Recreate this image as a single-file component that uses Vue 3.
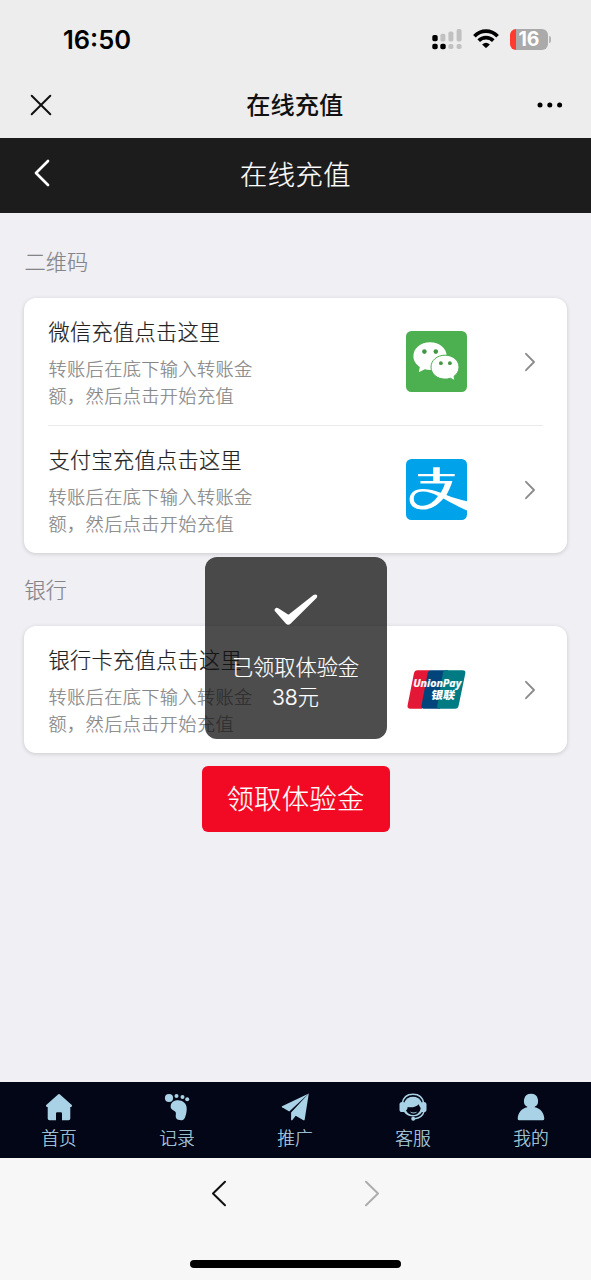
<script setup>
const desc = '转账后在底下输入转账金额，然后点击开始充值'
const groups = [
  {
    title: '二维码',
    items: [
      { name: '微信充值点击这里', icon: 'wechat' },
      { name: '支付宝充值点击这里', icon: 'alipay' },
    ],
  },
  { title: '银行', items: [{ name: '银行卡充值点击这里', icon: 'unionpay' }] },
]
const tabs = [
  { label: '首页', icon: 'home' },
  { label: '记录', icon: 'foot' },
  { label: '推广', icon: 'plane' },
  { label: '客服', icon: 'service' },
  { label: '我的', icon: 'user' },
]
</script>

<template>
  <div class="screen">
    <header class="status">
      <span class="time">16:50</span>
      <div class="indicators">
        <svg width="31" height="22" viewBox="0 0 31 22">
          <g fill="#000">
            <rect x="0.3" y="7" width="5.4" height="6.2" rx="1.8" />
            <rect x="0.3" y="15.8" width="5.4" height="5.4" rx="1.8" />
            <rect x="8.3" y="15.8" width="5.4" height="5.4" rx="1.8" />
          </g>
          <g fill="#c1c1c1">
            <rect x="8.4" y="5.8" width="5" height="7.6" rx="1.7" />
            <rect x="16.4" y="3.6" width="5" height="9.8" rx="1.7" />
            <rect x="24.6" y="1" width="5" height="12.4" rx="1.7" />
            <rect x="16.4" y="16" width="5" height="5" rx="1.8" />
            <rect x="24.6" y="16" width="5" height="5" rx="1.8" />
          </g>
        </svg>
        <svg class="wifi" width="26" height="20" viewBox="0 0 26 20">
          <g fill="none" stroke="#000" stroke-width="3.7">
            <path d="M1.4 7.2C8 .5 18 .5 24.6 7.2" />
            <path d="M5.7 11.7C9.9 7.7 16.1 7.7 20.3 11.7" />
          </g>
          <path d="M9.1 15.4Q13 12 16.9 15.4L13.7 18.6Q13 19.3 12.3 18.6Z" fill="#000" />
        </svg>
        <div class="battery"><span>16</span></div>
        <i class="nub"></i>
      </div>
    </header>

    <div class="webbar">
      <svg width="22" height="22" viewBox="0 0 22 22"><path d="M1.7 1.7 20.3 20.3M20.3 1.7 1.7 20.3" fill="none" stroke="#111" stroke-width="2" stroke-linecap="round" /></svg>
      <span class="webtitle">在线充值</span>
      <svg width="26" height="6" viewBox="0 0 26 6"><circle cx="3" cy="3" r="2.5" /><circle cx="12.8" cy="3" r="2.5" /><circle cx="22.6" cy="3" r="2.5" /></svg>
    </div>

    <div class="pagebar">
      <svg width="16" height="28" viewBox="0 0 16 28"><path d="M14 2 2 14 14 26" fill="none" stroke="#fff" stroke-width="2.7" stroke-linecap="round" stroke-linejoin="round" /></svg>
      <span class="pagetitle">在线充值</span>
    </div>

    <main>
      <section v-for="g in groups" :key="g.title">
        <h2>{{ g.title }}</h2>
        <div class="card">
          <div v-for="item in g.items" :key="item.name" class="item">
            <div class="copy">
              <h3>{{ item.name }}</h3>
              <p>{{ desc }}</p>
            </div>
            <svg v-if="item.icon === 'wechat'" class="logo" viewBox="0 0 61 61">
              <rect width="61" height="61" rx="5.5" fill="#4caf50" />
              <path d="M24 11.3C14.8 11.3 7.4 17.2 7.4 25.2C7.4 29.8 10 33.3 13.8 36L12.8 41.3L18.8 38.3C20.6 38.8 22.4 39 24 39C33.2 39 40.7 33 40.7 25.2C40.7 17.2 33.2 11.3 24 11.3Z" fill="#fff" />
              <path d="M39 24.2C31 24.2 25 29.4 25 36.1C25 42.8 31 48.1 39 48.1C40.9 48.1 42.7 47.8 44.3 47.2L49 49.7L48 45.3C51.1 43.2 53 39.9 53 36.1C53 29.4 47 24.2 39 24.2Z" fill="#fff" stroke="#4caf50" stroke-width="1" />
              <g fill="#439847"><circle cx="18.4" cy="20.6" r="2.3" /><circle cx="29.8" cy="20.6" r="2.3" /><circle cx="34.9" cy="32.2" r="1.9" /><circle cx="43.9" cy="32.2" r="1.9" /></g>
            </svg>
            <svg v-else-if="item.icon === 'alipay'" class="logo" viewBox="0 0 61 61">
              <rect width="61" height="61" rx="5.5" fill="#00a2e9" />
              <path d="M27.2 8.2H33.8V14.9H48.7V17.3H33.8V22H46.4C45 27 42.8 31.8 40.4 35.9C47 38.5 54 40.8 61 42.2V51.5C52.5 48 44.5 43.6 37.5 39.6C31.2 47 24.5 50.5 17 50.5C9 50.5 3.6 46.7 3.6 40.4C3.6 34.1 8.8 30.1 16.5 30.1C22.7 30.1 28.8 31.5 34.7 33.8C36.5 30.9 38 27.8 38.9 24.6H14.4V22H27.2V17.3H12V14.9H27.2Z" fill="#fff" />
              <path d="M32 37C26.5 34 21.3 32.4 16.5 32.5C10.8 32.5 7.8 35.5 7.8 39.7C7.8 44 11.2 46.7 16.8 46.7C22.5 46.7 27.5 43.2 32 37Z" fill="#00a2e9" />
            </svg>
            <svg v-else class="logo" viewBox="0 0 61 61">
              <path d="M11 11.2H24L16 49.7H4.5Q.9 49.7 1.6 46.3L8 14Q8.6 11.2 11 11.2Z" fill="#e21836" />
              <path d="M24.5 11.2H42L34 49.7H18Q14.8 49.7 15.5 46.3L21.8 13.8Q22.3 11.2 24.5 11.2Z" fill="#00447c" />
              <path d="M39.5 11.2H56.5Q60 11.2 59.3 14.5L52.6 46.8Q52 49.7 49 49.7H33.5Q30.7 49.7 31.3 46.5L37 13.5Q37.4 11.2 39.5 11.2Z" fill="#007b84" />
              <text x="7.2" y="28.2" textLength="48" lengthAdjust="spacingAndGlyphs" class="union-en">UnionPay</text>
              <text transform="translate(24.5 40.2) skewX(-10)" textLength="24" lengthAdjust="spacingAndGlyphs" class="union-cn">银联</text>
            </svg>
            <svg class="arrow" width="12" height="20" viewBox="0 0 12 20"><path d="M2 1.8 10 10 2 18.2" fill="none" stroke="#8c8c8c" stroke-width="1.9" stroke-linecap="round" stroke-linejoin="round" /></svg>
          </div>
        </div>
      </section>
      <button class="claim">领取体验金</button>
    </main>

    <nav class="tabs">
      <div v-for="t in tabs" :key="t.label" class="tab">
        <svg width="28" height="28" viewBox="0 0 28 28" fill="#a9d2e6">
          <path v-if="t.icon === 'home'" d="M13.3 1.2Q14 .6 14.7 1.2L26.8 12.1Q27.8 13.7 26 14H25.3V25.5Q25.3 27.3 23.5 27.3H17V20.5Q17 19.3 15.8 19.3H12.2Q11 19.3 11 20.5V27.3H4.5Q2.7 27.3 2.7 25.5V14H2Q.2 13.7 1.2 12.1Z" />
          <g v-else-if="t.icon === 'foot'">
            <circle cx="6" cy="5" r="4.1" /><circle cx="13.5" cy="3.1" r="2" /><circle cx="19.5" cy="3.9" r="2" /><circle cx="24.2" cy="6.3" r="2" />
            <path d="M7.7 12.6C8.4 8.7 12 6.9 16.5 7.4C21.5 8 24 11.7 23.7 16.5C23.5 20 22.8 22.5 22 24.4C21.1 26.7 18.8 27.6 16.5 27.1C13.3 26.5 12.4 24.5 12.8 22C13.2 19.8 12.7 18.7 11 17.8C8.7 16.8 7.2 15.2 7.7 12.6Z" />
          </g>
          <g v-else-if="t.icon === 'plane'">
            <path d="M27.8.5 1 13.3Q.3 13.8 1.1 14.3L8.2 18.4Z" /><path d="M27.8.5 10.1 19.6V27Q10.8 27.8 11.6 26.8L14.7 22.7L22.4 27.2Q23.4 27.6 23.7 26.4Z" />
          </g>
          <g v-else-if="t.icon === 'service'">
            <path d="M3.2 10.5C4.1 4.5 8.1 1.2 14 1.2S23.9 4.5 24.8 10.5" fill="none" stroke="#a9d2e6" stroke-width="1.6" />
            <path d="M5.3 9.5C6.8 5.8 10 3.8 14 3.8S21.2 5.8 22.7 9.5L23.5 17.5C22.3 21.3 18.7 23.4 14 23.4S5.7 21.3 4.5 17.5Z" />
            <rect x=".5" y="9" width="5.8" height="10" rx="2.6" /><rect x="21.7" y="9" width="5.8" height="10" rx="2.6" />
            <path d="M7 17.3C8.1 16.6 8.7 15.4 8.6 14C12.8 15 17.5 13.7 19.9 11.2C20.1 13 21 13.7 21.7 15C21.2 19.3 18.1 22 14.4 22C10.9 22 8.1 20.4 7 17.3Z" fill="#030616" />
            <path d="M10.8 18.6Q14.6 20.3 18.4 18.6Q17.3 20.6 14.6 20.6Q11.9 20.6 10.8 18.6Z" />
            <path d="M25 18.5C23.8 23 20 25.3 15.4 25.7" fill="none" stroke="#a9d2e6" stroke-width="1.4" /><circle cx="14.2" cy="25.7" r="2" />
          </g>
          <path v-else d="M14 .8A7 7 0 0 1 17.7 13.8V14.2C23.5 15.3 27.2 20 27.3 25.7Q27.3 27.3 25.7 27.3H2.3Q.7 27.3.7 25.7C.8 20 4.5 15.3 10.3 14.2V13.8A7 7 0 0 1 14 .8Z" />
        </svg>
        <span>{{ t.label }}</span>
      </div>
    </nav>

    <footer>
      <div class="history">
        <svg width="16" height="27" viewBox="0 0 16 27"><path d="M14 1.8 2 13.5 14 25.2" fill="none" stroke="#111" stroke-width="2" stroke-linecap="round" stroke-linejoin="round" /></svg>
        <svg width="16" height="27" viewBox="0 0 16 27"><path d="M2 1.8 14 13.5 2 25.2" fill="none" stroke="#adadad" stroke-width="2" stroke-linecap="round" stroke-linejoin="round" /></svg>
      </div>
      <div class="homebar"></div>
    </footer>

    <div class="toast">
      <svg width="44" height="32" viewBox="0 0 44 32"><path d="M1 17.2Q-.1 15.8 1.3 14.4Q2.6 13.4 4.3 14.3L13.7 20.3Q14.4 20.8 15.1 20.2L39.5 1Q41.5-.2 42.9 1.1Q43.6 2.4 42.5 4L16.5 29.7Q14.2 31.8 12 29.7Z" fill="#fff" /></svg>
      <span>已领取体验金<br />38元</span>
    </div>
  </div>
</template>

<style>
body {
  background: #efeff4;
}
</style>

<style scoped>
.screen {
  position: relative;
  width: 591px;
  height: 1280px;
  overflow: hidden;
  display: flex;
  flex-direction: column;
  background: #efeff4;
  font-family: "Liberation Sans", "Noto Sans CJK SC", sans-serif;
  font-weight: 300;
  -webkit-text-stroke-width: 0.2px;
}
.screen * {
  box-sizing: border-box;
}
svg {
  display: block;
  flex: none;
}
.status {
  height: 72px;
  padding: 7px 40px 0 63px;
  display: flex;
  align-items: center;
  justify-content: space-between;
  background: #ededed;
}
.time {
  font: 600 25.5px/30px Inter, sans-serif;
  color: #000;
  -webkit-text-stroke-width: 0;
}
.indicators {
  display: flex;
  align-items: center;
  height: 22px;
  margin-bottom: 1px;
}
.wifi {
  margin-left: 10px;
}
.battery {
  width: 38px;
  height: 21px;
  margin-left: 11px;
  border-radius: 6px;
  background: linear-gradient(90deg, #ff3b30 6px, #a9aaa9 6px);
  color: #fff;
  font: 700 19.5px/21px Inter, sans-serif;
  text-align: center;
  -webkit-text-stroke-width: 0;
}
.nub {
  width: 2px;
  height: 7px;
  margin-left: 1px;
  border-radius: 0 3px 3px 0;
  background: #b5b5b5;
}
.webbar {
  height: 66px;
  padding: 0 27.5px 1px 30px;
  display: flex;
  align-items: center;
  justify-content: space-between;
  background: #ededed;
}
.webtitle {
  margin-bottom: 3px;
  font-size: 24.2px;
  font-weight: 500;
  color: #111;
  -webkit-text-stroke-width: 0;
}
.pagebar {
  height: 75px;
  padding: 0 34px;
  display: grid;
  grid-template-columns: 16px 1fr 16px;
  align-items: center;
  background: #1c1c1c;
}
.pagebar svg {
  margin-bottom: 5px;
}
.pagetitle {
  margin-bottom: 5px;
  text-align: center;
  font-size: 27.3px;
  letter-spacing: 0.4px;
  color: #fff;
}
main {
  height: 869px;
  padding: 24px 24px 0;
}
section + section {
  margin-top: 12px;
}
h2 {
  margin: 0;
  height: 61px;
  padding: 1px 0 0 0.5px;
  font-size: 21.2px;
  line-height: 50px;
  font-weight: 300;
  color: #858589;
}
.card {
  padding: 0 24px;
  border-radius: 12px;
  background: #fff;
  box-shadow: 0 1px 4px rgba(0, 0, 0, 0.16);
}
.item {
  height: 127px;
  display: flex;
  align-items: center;
}
.item + .item {
  height: 128px;
  border-top: 1px solid #ebebeb;
}
.copy {
  width: 210px;
  margin-right: 148px;
  padding: 5px 0 0 0.5px;
}
h3 {
  margin: 0 0 9px;
  font-size: 21.2px;
  line-height: 31px;
  font-weight: 300;
  letter-spacing: 0.3px;
  white-space: nowrap;
  color: #222;
}
p {
  margin: 0;
  font-size: 18.2px;
  line-height: 27.5px;
  letter-spacing: 0.36px;
  color: #858585;
}
.logo {
  width: 61px;
  height: 61px;
}
.arrow {
  margin-left: 57px;
}
.union-en {
  font: italic 700 10.6px "Open Sans", sans-serif;
  fill: #fff;
  stroke: #fff;
  stroke-width: 0.2px;
}
.union-cn {
  font: 900 11px "Noto Sans CJK SC", sans-serif;
  fill: #fff;
  -webkit-text-stroke-width: 0;
}
.claim {
  display: block;
  width: 188px;
  height: 66px;
  margin: 13px auto 0;
  padding: 0 0 5px;
  border: 0;
  border-radius: 6px;
  background: #f20a24;
  color: #fff;
  font: inherit;
  font-size: 27.3px;
  letter-spacing: 0.3px;
}
.tabs {
  height: 76px;
  padding-right: 1px;
  display: grid;
  grid-template-columns: repeat(5, 1fr);
  background: #030616;
}
.tab {
  display: flex;
  flex-direction: column;
  align-items: center;
  padding-top: 11px;
  color: #aed4e0;
}
.tab span {
  font-size: 17.8px;
  line-height: 26px;
  margin-top: 5px;
}
footer {
  height: 122px;
  background: #f7f7f7;
}
.history {
  display: flex;
  justify-content: center;
  gap: 137px;
  padding-top: 22px;
}
.homebar {
  width: 211px;
  height: 8px;
  margin: 53px auto 0;
  border-radius: 4px;
  background: #000;
}
.toast {
  position: absolute;
  left: 204.5px;
  top: 557px;
  width: 182px;
  height: 182px;
  border-radius: 12px;
  padding-top: 37px;
  display: flex;
  flex-direction: column;
  align-items: center;
  background: rgba(17, 17, 17, 0.75);
  color: #fff;
  font-family: Inter, "Noto Sans CJK SC", sans-serif;
  font-size: 21.2px;
  line-height: 30px;
  text-align: center;
}
.toast span {
  margin-top: 26px;
}
</style>
